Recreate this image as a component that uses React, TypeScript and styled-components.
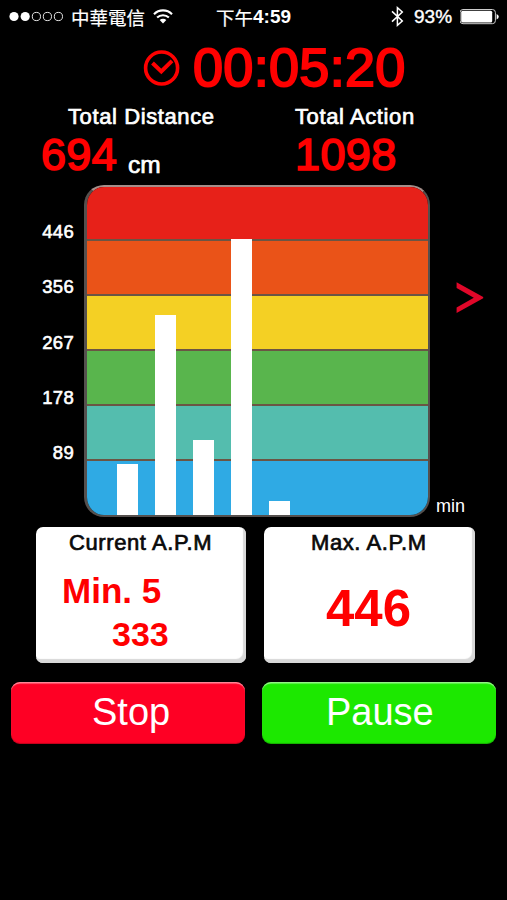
import React from "react";
import styled, { createGlobalStyle } from "styled-components";

const GlobalStyle = createGlobalStyle`
  * { box-sizing: border-box; }
  body {
    margin: 0;
    background: #000;
    color: #fff;
    font-family: "Liberation Sans", "Noto Sans CJK TC", Arial, sans-serif;
  }
`;

const Screen = styled.div`
  width: 507px;
  height: 900px;
  overflow: hidden;
  background: #000;
`;

const Label = styled.span<{
  $size: number;
  $line?: number;
  $weight?: number;
  $stroke?: number;
  $spacing?: number;
  $color?: string;
}>`
  display: block;
  white-space: pre;
  font-size: ${(p) => p.$size}px;
  line-height: ${(p) => (p.$line ? `${p.$line}px` : "1")};
  font-weight: ${(p) => p.$weight ?? 400};
  letter-spacing: ${(p) => p.$spacing ?? 0}px;
  color: ${(p) => p.$color ?? "#fff"};
  -webkit-text-stroke: ${(p) => p.$stroke ?? 0}px ${(p) => p.$color ?? "#fff"};
`;

const StatusBar = styled.header`
  display: grid;
  grid-template-columns: 216px 175px 1fr;
  align-items: center;
  height: 33px;
`;

const StatusGroup = styled.div<{ $pad?: number }>`
  display: flex;
  align-items: center;
  height: 33px;
  padding-left: ${(p) => p.$pad ?? 0}px;
`;

const Carrier = styled(Label)`
  width: 75px;
  margin: 0 7px 0 6px;
  font-family: "Noto Sans CJK TC", sans-serif;
`;

const Meridiem = styled(Label)`
  font-family: "Noto Sans CJK TC", sans-serif;
`;

const Percent = styled(Label)`
  width: 46px;
  margin-left: 10px;
`;

const TimerRow = styled.section`
  display: flex;
  align-items: center;
  gap: 12px;
  height: 68px;
  padding-left: 143px;
`;

const Totals = styled.section`
  display: grid;
  grid-template-columns: 254px 253px;
  height: 84px;
`;

const Total = styled.div``;

const TotalTitle = styled(Label)<{ $indent: number }>`
  padding-left: ${(p) => p.$indent}px;
`;

const TotalValue = styled.div<{ $indent: number }>`
  display: flex;
  gap: 11px;
  padding-left: ${(p) => p.$indent}px;
`;

const Unit = styled(Label)`
  padding-top: 10px;
`;

const ChartRow = styled.section`
  display: grid;
  grid-template-columns: 74px 346px 1fr;
  column-gap: 10px;
  height: 332px;
`;

const Scale = styled.div`
  display: flex;
  flex-direction: column;
  align-items: flex-end;
  padding-top: 19px;
`;

const Plot = styled.div`
  display: grid;
  width: 346px;
  height: 332px;
  border: solid #55504e;
  border-width: 2px 2px 2px 3px;
  border-top-color: #a58e8a;
  border-radius: 20px;
  overflow: hidden;
`;

const Bands = styled.div`
  grid-area: 1 / 1;
  display: flex;
  flex-direction: column;
`;

const Band = styled.div<{ $color: string; $height: number; $last?: boolean }>`
  height: ${(p) => p.$height}px;
  background: ${(p) => p.$color};
  border-bottom: ${(p) => (p.$last ? "0" : "2px solid #6b5544")};
`;

const Bars = styled.div`
  grid-area: 1 / 1;
  display: flex;
  align-items: flex-end;
  gap: 17px;
  padding-left: 30px;
`;

const Bar = styled.div<{ $height: number }>`
  width: 21px;
  height: ${(p) => p.$height}px;
  background: #fff;
`;

const ChartSide = styled.div`
  display: flex;
  flex-direction: column;
  justify-content: space-between;
  padding: 96px 0 0 0;
`;

const NextButton = styled.button`
  width: 30px;
  height: 34px;
  margin-left: 16px;
  padding: 0;
  border: 0;
  background: none;
  display: block;
`;

const AxisName = styled(Label)`
  margin-left: -4px;
`;

const Cards = styled.section`
  display: grid;
  grid-template-columns: 210px 211px;
  column-gap: 18px;
  padding: 10px 0 0 36px;
`;

const Card = styled.article`
  height: 136px;
  border-radius: 7px;
  background: #fff;
  box-shadow: inset -3px -4px 1px #d8d8d8;
`;

const CardText = styled(Label)<{ $indent: number }>`
  padding-left: ${(p) => p.$indent}px;
`;

const Actions = styled.section`
  display: grid;
  grid-template-columns: 234px 234px;
  column-gap: 17px;
  padding: 19px 0 0 11px;
`;

const ActionButton = styled.button<{ $color: string; $edge: string; $indent: number }>`
  height: 62px;
  padding: 0 0 2px ${(p) => p.$indent}px;
  border: 0;
  border-radius: 9px;
  background: ${(p) => p.$color};
  box-shadow: inset 0 2px 1px -0.5px ${(p) => p.$edge}, inset 0 -1px 1px rgba(0, 0, 0, 0.25);
  font-family: inherit;
  text-align: left;
`;

const SignalDots = () => (
  <svg width="56" height="12" viewBox="0 0 56 12">
    {[5, 16.2, 27.4, 38.4, 49.4].map((x, i) => (
      <circle key={x} cx={x} cy="5.5" r={i < 2 ? 4.6 : 4.1} fill={i < 2 ? "#fff" : "none"} stroke="#fff" strokeWidth={i < 2 ? 0 : 0.9} />
    ))}
  </svg>
);

const Wifi = () => (
  <svg width="20" height="16" viewBox="0 0 20 16" fill="none" stroke="#fff" strokeWidth="2.1">
    <path d="M1 5.2 A12.6 12.6 0 0 1 19 5.2" />
    <path d="M4.1 8.6 A8.4 8.4 0 0 1 15.9 8.6" />
    <path d="M10 14.5 L6.7 11.1 A4.7 4.7 0 0 1 13.3 11.1 Z" fill="#fff" stroke="none" />
  </svg>
);

const Bluetooth = () => (
  <svg width="13" height="21" viewBox="0 0 13 21" fill="none" stroke="#fff" strokeWidth="1.5">
    <path d="M1 5.4 L11.3 15 L6.4 19.3 V1.7 L11.3 6 L1 15.6" />
  </svg>
);

const Battery = () => (
  <svg width="40" height="16" viewBox="0 0 40 16">
    <rect x="0" y="0.5" width="35.4" height="14.2" rx="3" fill="none" stroke="#ccc" />
    <rect x="1.2" y="1.7" width="31" height="11.8" rx="1.5" fill="#fff" />
    <path d="M36.6 5 Q38.8 6 38.8 7.7 T36.6 10.5 Z" fill="#fff" />
  </svg>
);

const Clock = () => (
  <svg width="38" height="38" viewBox="0 0 38 38" fill="none" stroke="#f00">
    <circle cx="18.6" cy="20" r="16" strokeWidth="3.6" />
    <path d="M9.5 15 L18.3 23.5 L29 12.8" strokeWidth="4" />
  </svg>
);

const Chevron = () => (
  <svg width="30" height="34" viewBox="0 0 30 34">
    <path d="M0.6 1.3 L27.2 16.1 V17.2 L0.6 32 V26.6 L17.8 16.8 L0.6 7 Z" fill="#e00729" />
  </svg>
);

const scale = [
  { value: "446", line: 55 },
  { value: "356", line: 56 },
  { value: "267", line: 55 },
  { value: "178", line: 56 },
  { value: "89", line: 53 },
];

const bands = [
  { color: "#e72119", height: 54 },
  { color: "#ea5318", height: 55 },
  { color: "#f4d024", height: 55 },
  { color: "#59b54d", height: 55 },
  { color: "#54bdae", height: 55 },
  { color: "#2faae4", height: 54 },
];

const bars = [51, 200, 75, 276, 14];

export default function App() {
  return (
    <Screen>
      <GlobalStyle />
      <StatusBar>
        <StatusGroup $pad={9}>
          <SignalDots />
          <Carrier $size={18.5} $line={30} $stroke={0.2}>中華電信</Carrier>
          <Wifi />
        </StatusGroup>
        <StatusGroup>
          <Meridiem $size={18.5} $line={30} $stroke={0.2}>下午</Meridiem>
          <Label $size={19} $line={33} $weight={700}>4:59</Label>
        </StatusGroup>
        <StatusGroup>
          <Bluetooth />
          <Percent $size={19} $line={33} $stroke={0.4}>93%</Percent>
          <Battery />
        </StatusGroup>
      </StatusBar>

      <TimerRow>
        <Clock />
        <Label $size={54} $line={68} $stroke={2} $spacing={0.3} $color="#f00">00:05:20</Label>
      </TimerRow>

      <Totals>
        <Total>
          <TotalTitle $size={22} $line={32} $stroke={0.7} $spacing={0.6} $indent={68}>Total Distance</TotalTitle>
          <TotalValue $indent={41}>
            <Label $size={45} $line={43} $stroke={1.7} $spacing={0.3} $color="#f00">694</Label>
            <Unit $size={24.5} $line={43} $stroke={0.7}>cm</Unit>
          </TotalValue>
        </Total>
        <Total>
          <TotalTitle $size={22} $line={32} $stroke={0.7} $spacing={0.6} $indent={41}>Total Action</TotalTitle>
          <TotalValue $indent={41}>
            <Label $size={45} $line={43} $stroke={1.7} $spacing={0.4} $color="#f00">1098</Label>
          </TotalValue>
        </Total>
      </Totals>

      <ChartRow>
        <Scale>
          {scale.map((s) => (
            <Label key={s.value} $size={18.5} $line={s.line} $stroke={0.6} $spacing={0.3}>{s.value}</Label>
          ))}
        </Scale>
        <Plot>
          <Bands>
            {bands.map((b, i) => (
              <Band key={b.color} $color={b.color} $height={b.height} $last={i === bands.length - 1} />
            ))}
          </Bands>
          <Bars>
            {bars.map((h) => (
              <Bar key={h} $height={h} />
            ))}
          </Bars>
        </Plot>
        <ChartSide>
          <NextButton aria-label="Next"><Chevron /></NextButton>
          <AxisName $size={18} $line={22}>min</AxisName>
        </ChartSide>
      </ChartRow>

      <Cards>
        <Card>
          <CardText $size={22} $line={32} $stroke={0.7} $spacing={0.6} $color="#0a0a0a" $indent={33}>Current A.P.M</CardText>
          <CardText $size={35} $line={64} $weight={700} $color="#f00" $indent={26}>Min. 5</CardText>
          <CardText $size={34} $line={23} $weight={700} $color="#f00" $indent={76}>333</CardText>
        </Card>
        <Card>
          <CardText $size={22} $line={32} $stroke={0.7} $spacing={0.6} $color="#0a0a0a" $indent={47}>Max. A.P.M</CardText>
          <CardText $size={51} $line={99} $weight={700} $color="#f00" $indent={62}>446</CardText>
        </Card>
      </Cards>

      <Actions>
        <ActionButton $color="#fe0024" $edge="#ff8c9c" $indent={81}>
          <Label $size={38} $line={60}>Stop</Label>
        </ActionButton>
        <ActionButton $color="#1ce800" $edge="#98f58c" $indent={64}>
          <Label $size={38} $line={60}>Pause</Label>
        </ActionButton>
      </Actions>
    </Screen>
  );
}
